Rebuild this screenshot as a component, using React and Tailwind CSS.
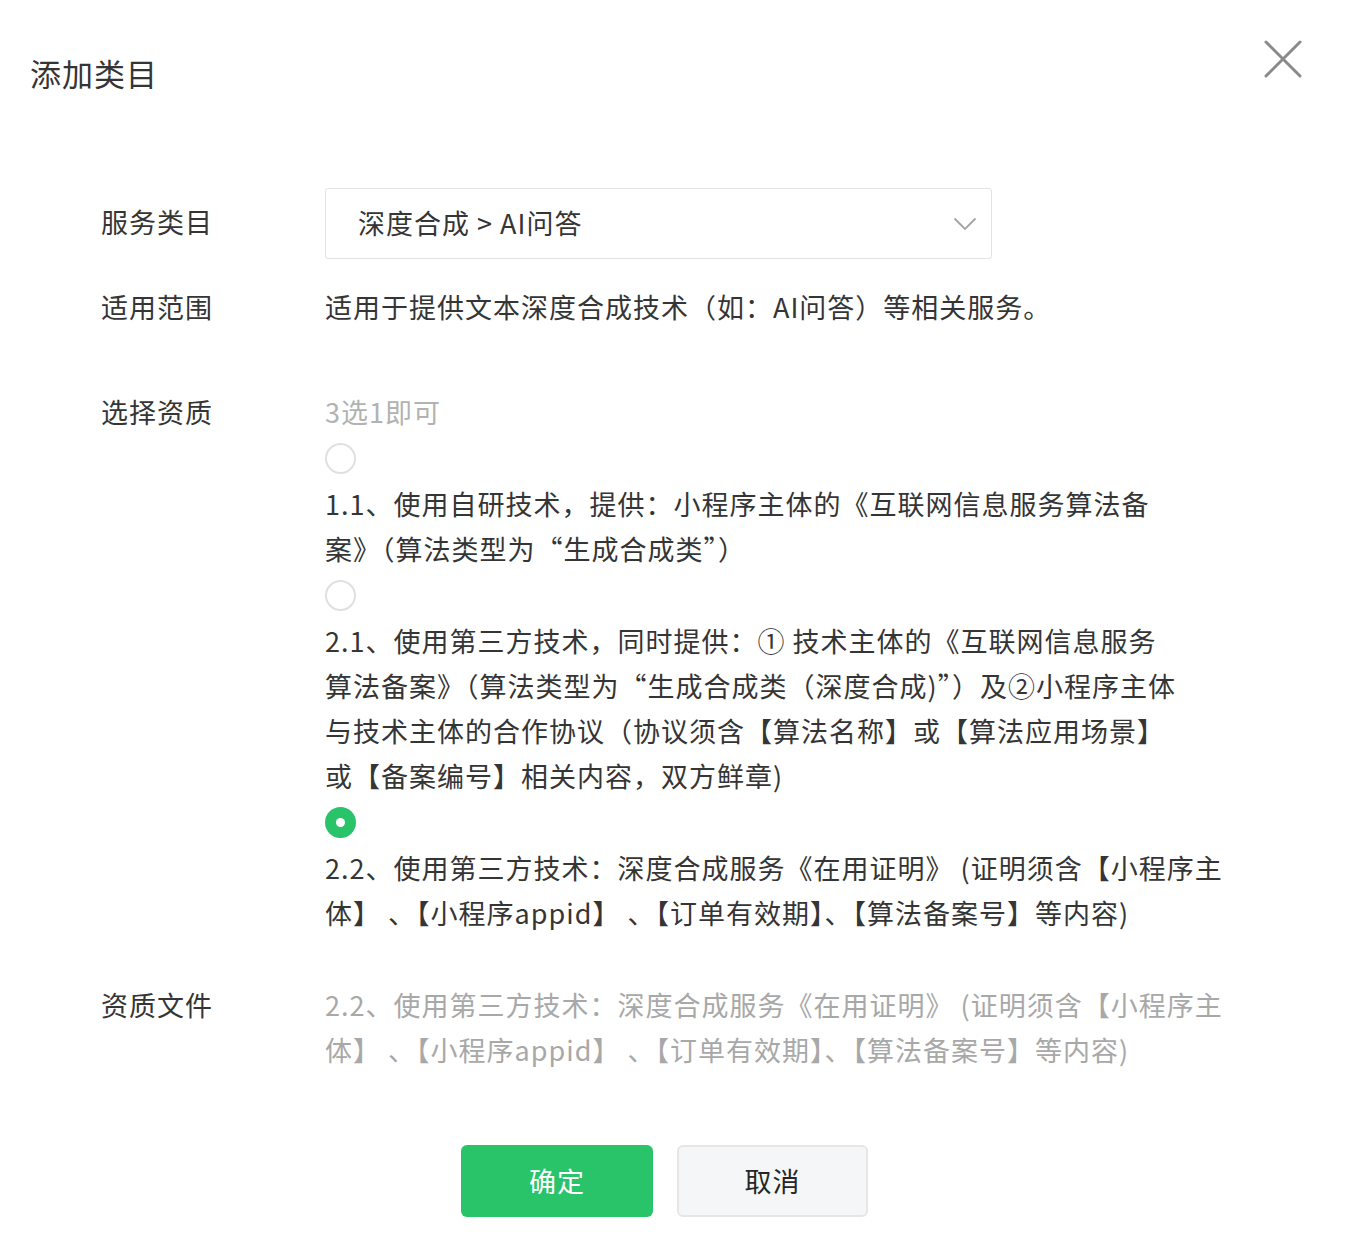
const font = { fontFamily: '"Noto Sans CJK SC", "Noto Sans", sans-serif' }

function Radio({ checked }) {
  if (checked) {
    return (
      <span className="mt-[9px] flex h-[31px] w-[31px] items-center justify-center rounded-full bg-[#29c36a]">
        <span className="h-[9px] w-[9px] rounded-full bg-white" />
      </span>
    )
  }
  return <span className="mt-[9px] block h-[31px] w-[31px] rounded-full border-2 border-[#e0e0e0] bg-white" />
}

function Row({ label, children, className = '' }) {
  return (
    <div className={`flex ${className}`}>
      <div className="w-[224px] shrink-0 leading-[45px]">{label}</div>
      <div className="min-w-0 flex-1">{children}</div>
    </div>
  )
}

const options = [
  {
    lines: ['1.1、使用自研技术，提供：小程序主体的《互联网信息服务算法备', '案》（算法类型为“生成合成类”）'],
  },
  {
    lines: [
      '2.1、使用第三方技术，同时提供：① 技术主体的《互联网信息服务',
      '算法备案》（算法类型为“生成合成类（深度合成)”）及②小程序主体',
      '与技术主体的合作协议（协议须含【算法名称】或【算法应用场景】',
      '或【备案编号】相关内容，双方鲜章)',
    ],
  },
  {
    lines: ['2.2、使用第三方技术：深度合成服务《在用证明》 (证明须含【小程序主', '体】 、【小程序appid】 、【订单有效期】、【算法备案号】等内容)'],
    checked: true,
  },
]

export default function App() {
  return (
    <div className="min-h-[1244px] w-full bg-white tracking-[1px] text-[#353535]" style={font}>
      <div className="flex items-start justify-between pl-[30px] pr-[44px] pt-[40px]">
        <h1 className="mt-[10px] text-[31px] leading-[46px] font-normal">添加类目</h1>
        <button type="button" aria-label="关闭" className="h-[38px] w-[38px]">
          <svg viewBox="0 0 38 38" className="h-[38px] w-[38px]">
            <path d="M2 2L36 36M36 2L2 36" stroke="#8a8a8a" strokeWidth="3" strokeLinecap="round" />
          </svg>
        </button>
      </div>

      <div className="pl-[101px] pt-[92px] text-[27px]">
        <Row label={<span className="block leading-[68px]">服务类目</span>}>
          <div className="flex h-[71px] w-[667px] items-center justify-between rounded-[3px] border border-[#e3e3e3] pl-[32px] pr-[14px]">
            <span>深度合成 &gt; AI问答</span>
            <svg viewBox="0 0 24 14" className="h-[14px] w-[24px]">
              <path d="M1.5 1.5L12 12L22.5 1.5" fill="none" stroke="#a3a3a3" strokeWidth="1.8" />
            </svg>
          </div>
        </Row>

        <Row label="适用范围" className="mt-[25px]">
          <p className="leading-[45px]">适用于提供文本深度合成技术（如：AI问答）等相关服务。</p>
        </Row>

        <Row label="选择资质" className="mt-[60px]">
          <p className="leading-[45px] text-[#b2b2b2]">3选1即可</p>
          {options.map((option, i) => (
            <div key={i}>
              <Radio checked={option.checked} />
              <p className="mt-[7px] whitespace-nowrap leading-[45px]">
                {option.lines.map((line, j) => (
                  <span key={j} className="block">
                    {line}
                  </span>
                ))}
              </p>
            </div>
          ))}
        </Row>

        <Row label="资质文件" className="mt-[47px]">
          <p className="whitespace-nowrap leading-[45px] text-[#a8a8a8]">
            {options[2].lines.map((line, j) => (
              <span key={j} className="block">
                {line}
              </span>
            ))}
          </p>
        </Row>
      </div>

      <div className="mt-[73px] flex justify-center gap-[24px] pr-[17px] text-[27px]">
        <button type="button" className="h-[72px] w-[192px] rounded-[6px] bg-[#29c36a] text-white">
          确定
        </button>
        <button type="button" className="h-[72px] w-[191px] rounded-[6px] border-2 border-[#e6e6e6] bg-[#f5f6f8] text-[#262626]">
          取消
        </button>
      </div>
    </div>
  )
}
